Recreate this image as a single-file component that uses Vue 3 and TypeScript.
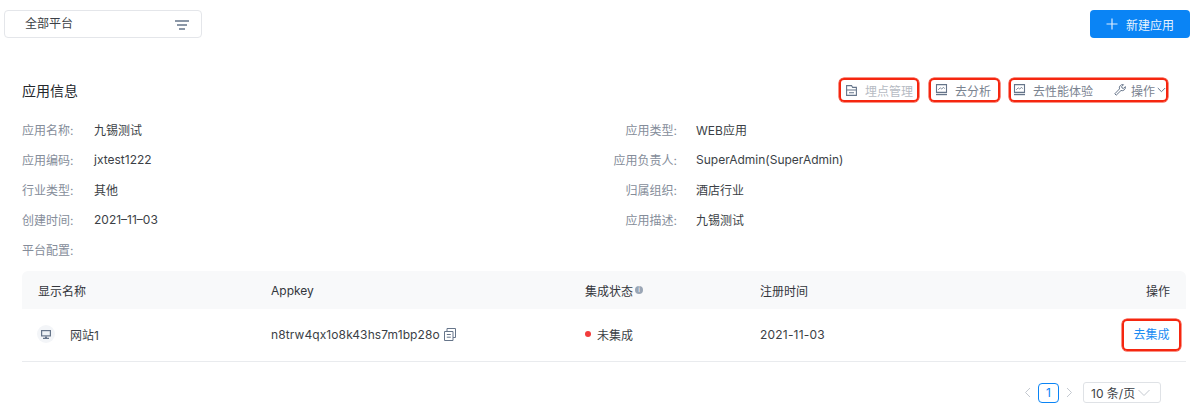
<script setup lang="ts">
interface InfoRow {
  label: string;
  value: string;
}

const leftInfo: InfoRow[] = [
  { label: '应用名称:', value: '九锡测试' },
  { label: '应用编码:', value: 'jxtest1222' },
  { label: '行业类型:', value: '其他' },
  { label: '创建时间:', value: '2021–11–03' },
  { label: '平台配置:', value: '' },
];

const rightInfo: InfoRow[] = [
  { label: '应用类型:', value: 'WEB应用' },
  { label: '应用负责人:', value: 'SuperAdmin(SuperAdmin)' },
  { label: '归属组织:', value: '酒店行业' },
  { label: '应用描述:', value: '九锡测试' },
];
</script>

<template>
  <div class="page">
    <header class="topbar">
      <div class="platform-select">
        <span class="platform-text">全部平台</span>
        <svg class="filter-icon" width="14" height="10" viewBox="0 0 14 10">
          <path d="M0 1h14M2 5h10M4 9h6" stroke="#66758a" stroke-width="1.7" fill="none" />
        </svg>
      </div>
      <button class="primary-btn" type="button">
        <svg width="12" height="12" viewBox="0 0 12 12">
          <path d="M6 .5v11M.5 6h11" stroke="#dcecfd" stroke-width="1.2" fill="none" />
        </svg>
        <span>新建应用</span>
      </button>
    </header>

    <section class="card">
      <div class="card-head">
        <h2 class="card-title">应用信息</h2>
        <div class="actions">
          <div class="marked first">
            <svg width="11" height="11" viewBox="0 0 11 11" fill="none" stroke="#66758a" stroke-width="1.1">
              <path d="M.6.6h5l1 1.800h3.800v8H.6zM.6 5h9.800M3 7.800h5" />
            </svg>
            <span class="muted">埋点管理</span>
          </div>
          <div class="marked second">
            <svg width="13" height="12" viewBox="0 0 13 12" fill="none" stroke="#66758a" stroke-width="1.1">
              <path d="M1.500.6h10v7.800h-10z" />
              <path d="M3.200 5.800l2-2 1.600 1.300 1.500-1.800 1.500 1.300" stroke-width=".8" />
              <path d="M1 10.500h11" stroke-width="1.400" />
            </svg>
            <span>去分析</span>
          </div>
          <div class="marked third">
            <svg width="13" height="12" viewBox="0 0 13 12" fill="none" stroke="#66758a" stroke-width="1.1">
              <path d="M1.500.6h10v7.800h-10z" />
              <path d="M3.200 5.800l2-2 1.600 1.300 1.500-1.800 1.500 1.300" stroke-width=".8" />
              <path d="M1 10.500h11" stroke-width="1.400" />
            </svg>
            <span class="perf">去性能体验</span>
            <svg class="wrench" width="12" height="12" viewBox="0 0 12 12" fill="none" stroke="#66758a" stroke-width="1">
              <path d="M.8 9.800l4.700-4.900a3.300 3.300 0 0 1 4-4.200L7.700 2.500l.3 1.500 1.500.4 1.800-1.800A3.300 3.300 0 0 1 7 6.500l-4.800 4.700z" />
            </svg>
            <span class="op">操作</span>
            <svg width="9" height="6" viewBox="0 0 9 6" fill="none" stroke="#66758a" stroke-width="1">
              <path d="M.8 1l3.700 3.700L8.200 1" />
            </svg>
          </div>
        </div>
      </div>

      <div class="info">
        <div class="info-col">
          <div v-for="row in leftInfo" :key="row.label" class="info-row">
            <span class="info-label">{{ row.label }}</span>
            <span class="info-value">{{ row.value }}</span>
          </div>
        </div>
        <div class="info-col right">
          <div v-for="row in rightInfo" :key="row.label" class="info-row">
            <span class="info-label">{{ row.label }}</span>
            <span class="info-value">{{ row.value }}</span>
          </div>
        </div>
      </div>

      <div class="table">
        <div class="table-row table-header">
          <div>显示名称</div>
          <div>Appkey</div>
          <div class="status-head">
            集成状态
            <span class="info-dot">i</span>
          </div>
          <div>注册时间</div>
          <div class="cell-end">操作</div>
        </div>
        <div class="table-row table-body">
          <div class="name-cell">
            <span class="device-icon">
              <svg width="10" height="9" viewBox="0 0 10 9">
                <path d="M0 0h10v6.500H0z" fill="#66758a" />
                <path d="M1.200 1.200h7.600v4.100H1.200z" fill="#eef2f6" />
                <path d="M4 6.500h2V8H4zM2 7.800h6V9H2z" fill="#66758a" />
              </svg>
            </span>
            <span>网站1</span>
          </div>
          <div class="key-cell">
            <span>n8trw4qx1o8k43hs7m1bp28o</span>
            <svg width="12" height="13" viewBox="0 0 12 13" fill="none" stroke="#66758a" stroke-width="1">
              <path d="M.5 3.500h8.500v9H.5zM3 3.500v-3h8.500v9H9M2.800 6.500h4M2.800 9.200h4" />
            </svg>
          </div>
          <div class="status-cell">
            <span class="red-dot"></span>
            <span>未集成</span>
          </div>
          <div class="date-cell">2021-11-03</div>
          <div class="cell-end">
            <a class="integrate-link">去集成</a>
          </div>
        </div>
      </div>

      <div class="pager">
        <svg width="7" height="11" viewBox="0 0 7 11" fill="none" stroke="#c4c9d0" stroke-width="1">
          <path d="M6 1L1.500 5.500 6 10" />
        </svg>
        <span class="page-num">1</span>
        <svg width="7" height="11" viewBox="0 0 7 11" fill="none" stroke="#c4c9d0" stroke-width="1">
          <path d="M1 1l4.500 4.500L1 10" />
        </svg>
        <div class="page-size">
          <span>10 条/页</span>
          <svg width="12" height="8" viewBox="0 0 12 8" fill="none" stroke="#c4c9d0" stroke-width="1">
            <path d="M.5 1L6 6.500 11.500 1" />
          </svg>
        </div>
      </div>
    </section>
  </div>
</template>

<style>
body {
  background: #fff;
}
</style>

<style scoped>
.page {
  width: 1202px;
  height: 410px;
  box-sizing: border-box;
  overflow: hidden;
  padding: 10px 12px 0 4px;
  background: #fff;
  color: #2c2f36;
  font-family: Inter, "Noto Sans CJK SC", sans-serif;
  font-size: 12px;
}

.topbar {
  display: flex;
  justify-content: space-between;
  align-items: flex-start;
}

.platform-select {
  width: 198px;
  height: 28px;
  box-sizing: border-box;
  display: flex;
  align-items: center;
  justify-content: space-between;
  padding: 0 12px 0 20px;
  border: 1px solid #e4e6ea;
  border-radius: 4px;
  color: #3b3f46;
}

.platform-text {
  margin-top: -4px;
}

.filter-icon {
  margin-top: 2px;
}

.primary-btn {
  width: 100px;
  height: 28px;
  display: flex;
  align-items: center;
  justify-content: center;
  gap: 8px;
  border: 0;
  border-radius: 4px;
  background: #0a84f5;
  color: #e8f3fe;
  font: inherit;
  padding: 0;
}

.card {
  margin: 40px 4px 0 18px;
}

.card-head {
  display: flex;
  justify-content: space-between;
  align-items: center;
  height: 24px;
}

.card-title {
  margin: 0;
  font-size: 14px;
  font-weight: 400;
  color: #24272d;
}

.actions {
  display: flex;
  margin-right: 18px;
  color: #7a8390;
}

.marked {
  height: 24px;
  box-sizing: border-box;
  display: flex;
  align-items: center;
  border: 2px solid #f5260f;
  border-radius: 5px;
  box-shadow: 0 0 0 0.5px #f5260f;
  white-space: nowrap;
}

.first {
  width: 80px;
  padding-left: 5px;
}

.first .muted {
  margin-left: 8px;
}

.second {
  width: 71px;
  margin-left: 10px;
  padding-left: 4px;
}

.second span {
  margin-left: 7px;
}

.third {
  width: 159px;
  margin-left: 9px;
  padding-left: 2px;
}

.muted {
  color: #b6bbc3;
}

.perf {
  width: 60px;
  margin-left: 7px;
}

.wrench {
  margin-left: 21px;
}

.op {
  margin: 0 2px 0 5px;
}

.info {
  display: grid;
  grid-template-columns: 1fr 1fr;
  margin-top: 12px;
}

.info-col {
  display: flex;
  flex-direction: column;
}

.info-row {
  height: 30px;
  display: flex;
  align-items: center;
}

.info-label {
  width: 72px;
  color: #858d9a;
  flex: none;
}

.info-value {
  color: #3b3f46;
}

.right .info-label {
  width: 73px;
  text-align: right;
}

.right .info-value {
  margin-left: 19px;
}

.table {
  margin-top: 7px;
}

.table-row {
  display: grid;
  grid-template-columns: 233px 314px 175px 1fr 100px;
  align-items: center;
  padding: 0 16px;
}

.table-header {
  height: 38px;
  background: #f8f9fa;
  border-radius: 6px 6px 0 0;
  color: #33363c;
}

.table-body {
  height: 53px;
  box-sizing: border-box;
  padding-bottom: 2px;
  border-bottom: 1px solid #e9ebee;
  color: #3b3f46;
}

.cell-end {
  text-align: right;
}

.date-cell {
  letter-spacing: 0.2px;
}

.status-head {
  display: flex;
  align-items: center;
  gap: 2px;
}

.info-dot {
  width: 8px;
  height: 8px;
  border-radius: 50%;
  background: #9aa6b5;
  color: #fff;
  font-size: 7px;
  line-height: 8px;
  text-align: center;
}

.name-cell {
  display: flex;
  align-items: center;
}

.device-icon {
  width: 18px;
  height: 18px;
  margin-left: -1px;
  border-radius: 50%;
  background: #f3f5f8;
  display: flex;
  align-items: center;
  justify-content: center;
  margin-right: 15px;
}

.key-cell {
  display: flex;
  align-items: center;
  gap: 4px;
  letter-spacing: 0.1px;
}

.status-cell {
  display: flex;
  align-items: center;
  gap: 6px;
}

.red-dot {
  width: 6px;
  height: 6px;
  border-radius: 50%;
  background: #f23c3c;
}

.integrate-link {
  display: inline-block;
  box-sizing: border-box;
  width: 59px;
  height: 32px;
  margin-top: 2px;
  margin-right: -11px;
  border: 2px solid #f5260f;
  border-radius: 5px;
  box-shadow: 0 0 0 0.5px #f5260f;
  color: #1c8cf2;
  line-height: 28px;
  text-align: center;
  vertical-align: middle;
}

.pager {
  display: flex;
  justify-content: flex-end;
  align-items: center;
  margin-top: 20px;
  padding-right: 25px;
}

.page-num {
  width: 21px;
  height: 20px;
  box-sizing: border-box;
  margin: 0 7px;
  border: 1px solid #0a84f5;
  border-radius: 4px;
  color: #0a84f5;
  text-align: center;
  line-height: 18px;
}

.page-size {
  width: 78px;
  height: 21px;
  box-sizing: border-box;
  border: 1px solid #dfe2e6;
  border-radius: 3px;
  display: flex;
  align-items: center;
  justify-content: space-between;
  padding: 0 10px 0 7px;
  margin-left: 10px;
  color: #3b3f46;
}
</style>
